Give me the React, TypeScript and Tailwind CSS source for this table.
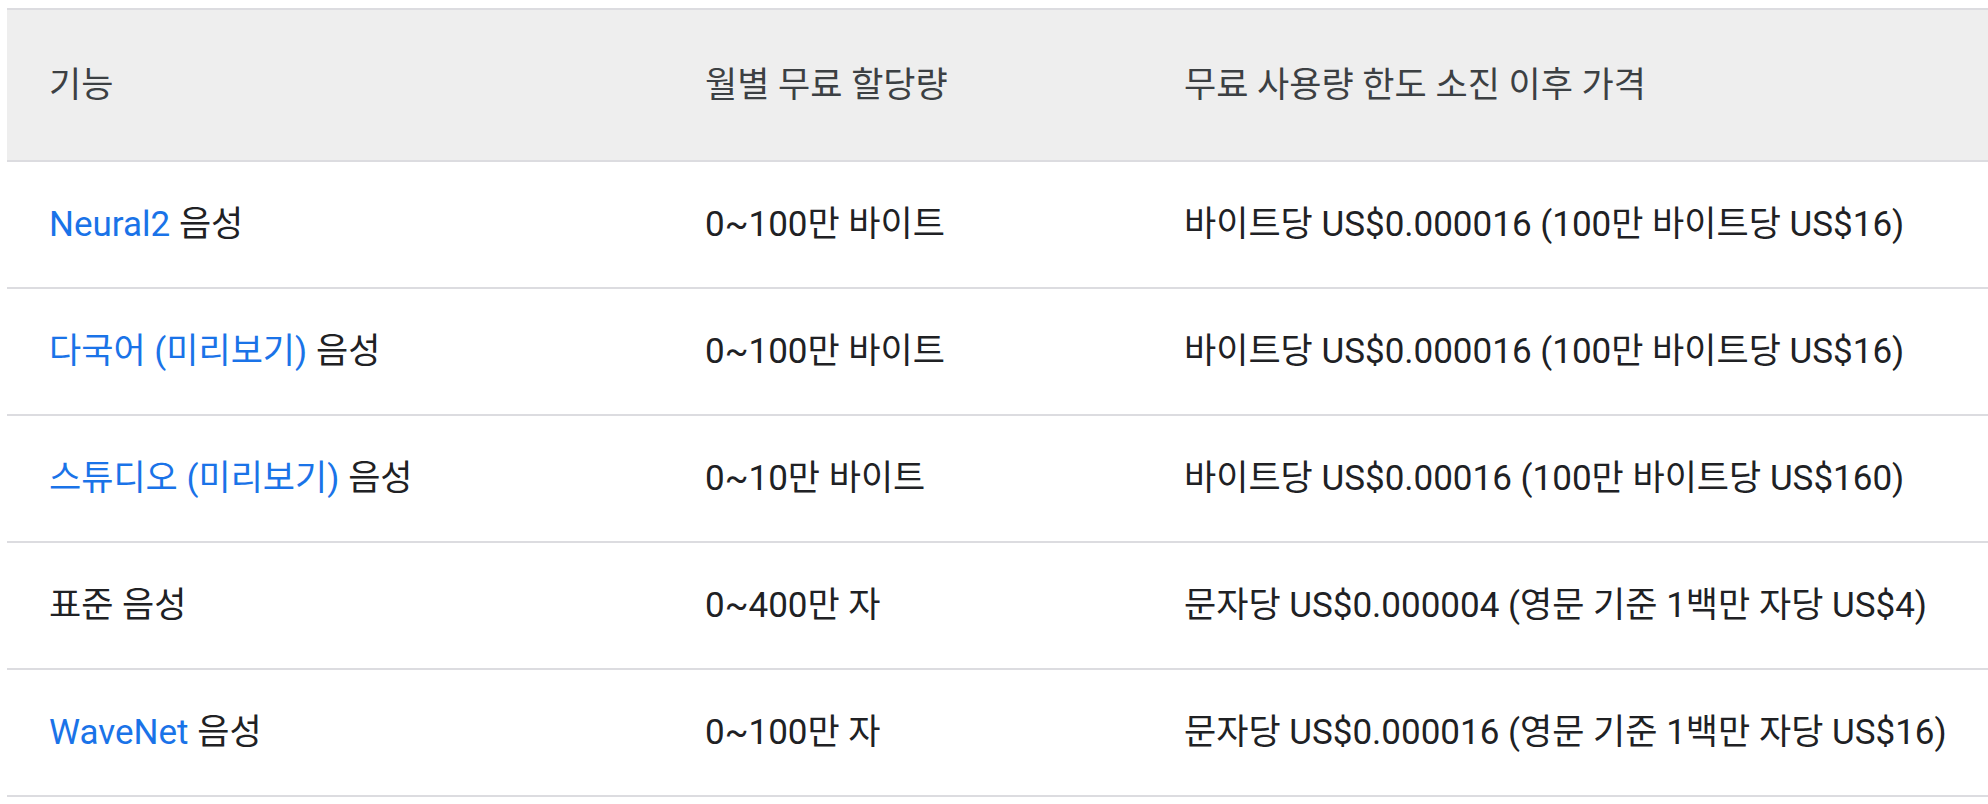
import React from 'react';

interface PriceRow {
  link?: string;
  rest: string;
  free: string;
  price: string;
}

const rows: PriceRow[] = [
  { link: 'Neural2', rest: ' 음성', free: '0~100만 바이트', price: '바이트당 US$0.000016 (100만 바이트당 US$16)' },
  { link: '다국어 (미리보기)', rest: ' 음성', free: '0~100만 바이트', price: '바이트당 US$0.000016 (100만 바이트당 US$16)' },
  { link: '스튜디오 (미리보기)', rest: ' 음성', free: '0~10만 바이트', price: '바이트당 US$0.00016 (100만 바이트당 US$160)' },
  { rest: '표준 음성', free: '0~400만 자', price: '문자당 US$0.000004 (영문 기준 1백만 자당 US$4)' },
  { link: 'WaveNet', rest: ' 음성', free: '0~100만 자', price: '문자당 US$0.000016 (영문 기준 1백만 자당 US$16)' },
];

const App: React.FC = () => {
  return (
    <div
      className="min-h-screen bg-white pt-[8px] pl-[7px] text-[35px] leading-none text-[#202124]"
      style={{ fontFamily: 'Roboto, "Noto Sans CJK KR", sans-serif' }}
    >
      <div className="border-t-2 border-[#dcdce0]">
        <div className="grid h-[152px] grid-cols-[656px_479px_1fr] items-center border-b-2 border-[#dcdce0] bg-[#eeeeee] text-[#3c4043]">
          <div className="pl-[42px] whitespace-pre">기능</div>
          <div className="pl-[42px] whitespace-pre">월별 무료 할당량</div>
          <div className="pl-[42px] whitespace-pre">무료 사용량 한도 소진 이후 가격</div>
        </div>
        {rows.map((row, i) => (
          <div
            key={i}
            className="grid h-[127px] grid-cols-[656px_479px_1fr] items-center border-b-2 border-[#dcdce0]"
          >
            <div className="pl-[42px] whitespace-pre">
              {row.link && <span className="text-[#1a73e8]">{row.link}</span>}
              {row.rest}
            </div>
            <div className="pl-[42px] whitespace-pre">{row.free}</div>
            <div className="pl-[42px] whitespace-pre">{row.price}</div>
          </div>
        ))}
      </div>
    </div>
  );
};

export default App;
